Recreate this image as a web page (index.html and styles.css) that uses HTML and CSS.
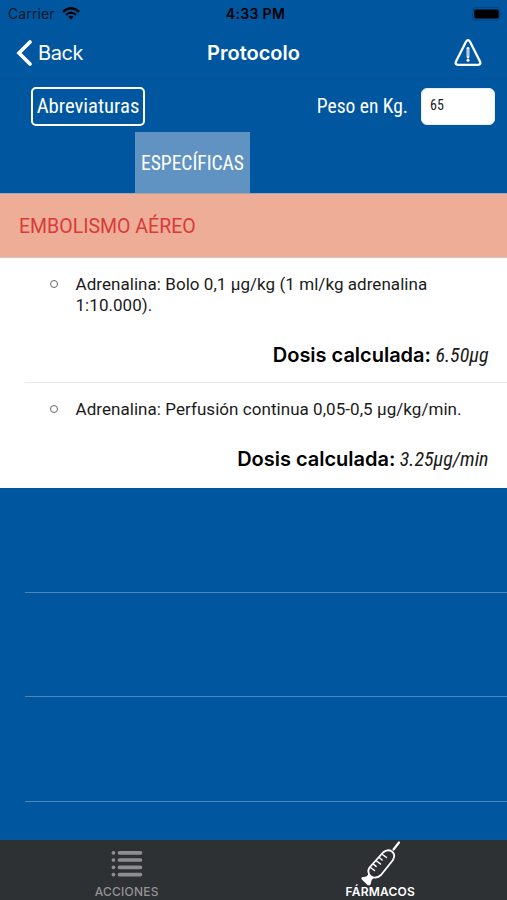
FILE: index.html
```html
<!DOCTYPE html>
<html lang="es">
<head>
  <meta charset="UTF-8" />
  <title>Protocolo</title>
  <link rel="stylesheet" href="styles.css">
</head>
<body>
  <div class="status-bar">
    <div class="carrier"><span>Carrier</span>
      <svg class="wifi" viewBox="0 0 18 13"><path d="M1 4.8Q9-2.3 17 4.8M3.9 7.8Q9 3.4 14.1 7.8" fill="none" stroke="#000" stroke-width="2.3"/><path d="M6.3 9.7Q9 7.6 11.7 9.7L9 12.4z"/></svg>
    </div>
    <span class="time">4:33 PM</span>
    <svg class="battery" viewBox="0 0 31 14"><rect x=".7" y=".7" width="27" height="12.6" rx="3.5" fill="none" stroke="#064684" stroke-width="1.2"/><rect x="2.2" y="2.5" width="24.5" height="9" rx="1.8"/><path d="M29 5q2 2 0 4z" fill="#064684"/></svg>
  </div>
  <div class="nav-bar">
    <a class="back"><svg viewBox="0 0 16 26"><path d="M14 2L3 13l11 11" fill="none" stroke="#fff" stroke-width="3.6" stroke-linecap="round"/></svg><span>Back</span></a>
    <h1>Protocolo</h1>
    <svg class="warning" viewBox="0 0 28 28"><path d="M12.1 2.6Q14 -.2 15.9 2.6L26 22.4Q27.3 25.8 24 25.8H4Q.7 25.8 2 22.4z" fill="none" stroke="#fff" stroke-width="2.3" stroke-linejoin="round"/><path d="M14 9.3v8.8" stroke="#fff" stroke-width="2.8" stroke-linecap="round"/><path d="M14 9.8v7.8" stroke="#6b9acb" stroke-width="1"/><circle cx="14" cy="21.2" r="1.5" fill="#fff"/></svg>
  </div>
  <div class="toolbar">
    <button class="abbr"><span class="condensed">Abreviaturas</span></button>
    <label class="condensed" for="weight">Peso en Kg.</label>
    <input class="condensed" id="weight" value="65">
  </div>
  <div class="tabs"><button class="tab"><span class="condensed">ESPECÍFICAS</span></button></div>
  <h2 class="section"><span>EMBOLISMO AÉREO</span></h2>
  <ul class="drugs">
    <li class="drug first">
      <div class="desc"><i class="bullet"></i><p>Adrenalina: Bolo 0,1 µg/kg (1 ml/kg adrenalina 1:10.000).</p></div>
      <div class="dose"><b>Dosis calculada:</b><em class="condensed">6.50µg</em></div>
    </li>
    <li class="drug">
      <div class="desc"><i class="bullet"></i><p>Adrenalina: Perfusión continua 0,05-0,5 µg/kg/min.</p></div>
      <div class="dose"><b>Dosis calculada:</b><em class="condensed">3.25µg/min</em></div>
    </li>
  </ul>
  <div class="empty-rows"><div></div><div></div><div></div></div>
  <div class="tab-bar">
    <a class="item">
      <svg class="list" viewBox="0 0 32 28"><g stroke="#8d8e8e" stroke-width="3.7" stroke-linecap="round"><path d="M2.4 2.8h.1M8.5 2.8h21M2.4 10h.1M8.5 10h21M2.4 17.3h.1M8.5 17.3h21M2.4 24.6h.1M8.5 24.6h21"/></g></svg>
      <span>ACCIONES</span>
    </a>
    <a class="item active">
      <svg class="syringe" viewBox="0 0 42 46"><g fill="none" stroke="#fff" stroke-linecap="round" stroke-linejoin="round"><path d="M34.5 9.5L40 2.5" stroke-width="2.2"/><path d="M10.5 27.5L24 12.5Q28.5 8.5 33 11.5Q36.8 14.5 34 20L22 35Q17 39.5 12 36.5Q7.5 32.5 10.5 27.5z" stroke-width="1.8"/><path d="M11.5 27.5l4 3M14.5 24.2l2.6 2.2M17.5 21l4 3M20.5 17.8l2.6 2.2M23.5 14.5l4 3" stroke-width="1.5"/></g><path d="M9.5 33.5L14.5 38Q12 39.5 12 43Q11.5 46.5 8.5 45L2.8 39.5Q1.5 36.8 4.5 37Q8.5 37 9.5 33.5z" fill="#fff"/></svg>
      <span>FÁRMACOS</span>
    </a>
  </div>
</body>
</html>
```
FILE: styles.css
```css
* { box-sizing:border-box; }
body { margin:0; width:507px; height:900px; display:flex; flex-direction:column; overflow:hidden; background:#0057a0; color:#fff; font-family:Inter, sans-serif; }
button { border:none; background:none; color:white; padding:0; }
.condensed { font-family:"Roboto Condensed", Roboto, sans-serif; font-stretch:75%; }
.status-bar { height:27px; display:grid; grid-template-columns:1fr auto 1fr; align-items:center; padding:0 4px 0 8px; color:#071827; font-size:14px; }
.carrier { display:flex; align-items:center; gap:7px; letter-spacing:.1px; }
.wifi { width:18px; height:13px; }
.time { font-weight:600; color:#000; letter-spacing:.35px; }
.battery { width:31px; height:14px; justify-self:end; }
.nav-bar { height:53px; display:grid; grid-template-columns:1fr auto 1fr; align-items:center; padding:0 25px 0 16px; border-bottom:1px solid #06529a; }
.back { display:flex; align-items:center; gap:6px; font-size:20px; letter-spacing:-.4px; }
.back svg { width:16px; height:26px; }
.nav-bar h1 { margin:0 0 0 9px; font-size:20px; font-weight:600; }
.warning { width:28px; height:28px; justify-self:end; }
.toolbar { height:52px; display:flex; align-items:center; padding:0 12px 0 31px; font-size:19.5px; }
.abbr { width:114px; height:39px; border:2px solid white; border-radius:5px; font-size:20.7px; }
.toolbar label { margin-left:auto; }
.toolbar input { width:74px; height:37px; margin-left:13px; padding:0 9px 3px 8px; border:1px solid #e8eef5; border-radius:6px; background:white; color:#222; font-size:14px; }
.tabs { height:61px; padding-left:135px; }
.tab { width:115px; height:61px; padding-top:2px; background:#6193c2; font-size:19.5px; }
.section { height:65px; margin:0; padding:1px 19px 0; display:flex; align-items:center; border-top:1px solid #a6a7b2; border-bottom:1px solid #cfc5c2; background:#edad96; color:#d93b3a; font:400 19.5px Roboto, sans-serif; }
.drugs { margin:0; padding:0; list-style:none; background:white; color:#1b1b1b; }
.drug { height:105px; padding:16px 18.5px 0 49.5px; }
.drug.first { height:125px; background:linear-gradient(#e8e8e8, #e8e8e8) 25px 100% / 482px 1px no-repeat; }
.desc { display:flex; gap:18px; font:17px/21px Roboto, sans-serif; letter-spacing:.05px; }
.desc p { margin:0; width:390px; }
.bullet { flex:none; width:8px; height:8px; margin-top:6px; border:1px solid #666; border-radius:50%; }
.dose { display:flex; justify-content:flex-end; align-items:baseline; gap:4.5px; margin-top:26px; font-size:20px; line-height:26px; }
.dose b { font-weight:600; color:#000; letter-spacing:-.02px; }
.empty-rows { flex:1; padding-left:25px; }
.empty-rows div { height:104.6px; border-bottom:1px solid #4d86b9; }
.tab-bar { height:60px; display:flex; background:#2e3133; font-size:12px; font-weight:500; }
.item { flex:1; display:flex; flex-direction:column; align-items:center; justify-content:flex-end; padding-bottom:1px; color:#929393; letter-spacing:.2px; }
.item.active { color:white; font-weight:600; }
.list { width:32px; height:28px; margin-bottom:6px; }
.syringe { width:42px; height:46px; margin-bottom:-2px; }
```
